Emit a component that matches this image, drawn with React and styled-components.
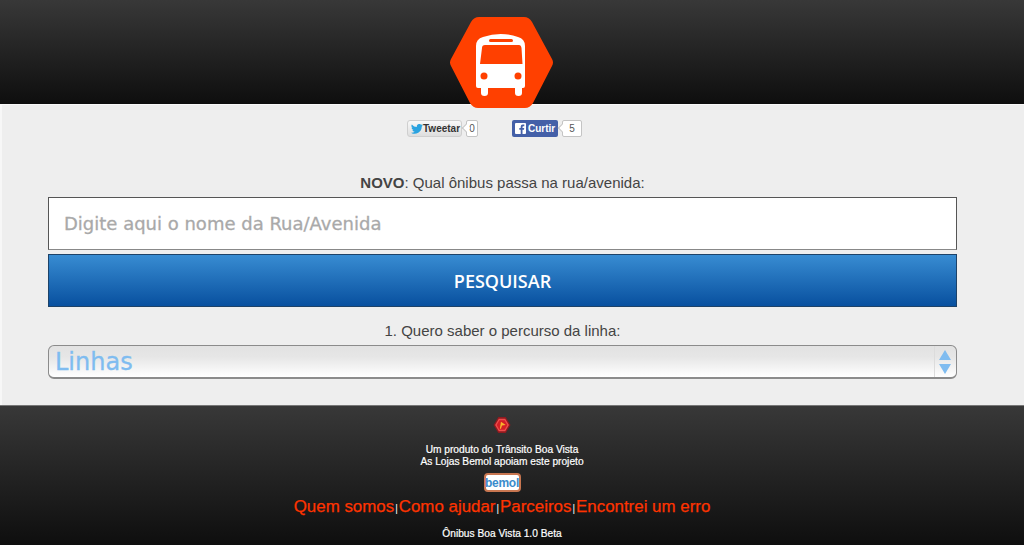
import React from 'react'
import styled, { createGlobalStyle } from 'styled-components'

const GlobalStyle = createGlobalStyle`
  html, body { margin: 0; padding: 0; background: #eeeeee; }
  body { font-family: "Liberation Sans", Arial, sans-serif; overflow: hidden; }
`

const Page = styled.div`
  width: 1024px;
  height: 545px;
  display: flex;
  flex-direction: column;
  overflow: hidden;
`

const Header = styled.header`
  position: relative;
  z-index: 1;
  flex: 0 0 105px;
  box-sizing: border-box;
  border-bottom: 1px solid #f8f8f8;
  background: linear-gradient(#383838, #0e0e0e);
`

const LogoMark = styled.svg`
  position: absolute;
  left: 449px;
  top: 16px;
  width: 105px;
  height: 93px;
`

const Main = styled.main`
  flex: 0 0 300px;
  box-sizing: border-box;
  padding: 15px 67px 0 46px;
  border-left: 2px solid #f7f7f7;
  background: #eeeeee;
  display: flex;
  flex-direction: column;
`

const Social = styled.div`
  display: flex;
  justify-content: flex-start;
  align-items: center;
  height: 17px;
  padding-left: 359px;
`

const TweetButton = styled.div`
  box-sizing: border-box;
  width: 55px;
  height: 17px;
  display: flex;
  align-items: center;
  padding-left: 3px;
  border: 1px solid #cfcfcf;
  border-radius: 3px;
  background: linear-gradient(#f8f8f8, #dedede);
  color: #333;
  font-size: 10px;
  font-weight: bold;
`

const LikeButton = styled.div`
  box-sizing: border-box;
  width: 46px;
  height: 17px;
  margin-left: 34px;
  display: flex;
  align-items: center;
  gap: 2px;
  padding-left: 3px;
  border-radius: 2px;
  background: #4460a8;
  color: #fff;
  font-size: 10px;
  font-weight: bold;
`

const FbSquare = styled.span`
  width: 11px;
  height: 11px;
  background: #fff;
  border-radius: 1px;
  display: block;
  overflow: hidden;
`

const Count = styled.div`
  position: relative;
  box-sizing: border-box;
  width: ${p => p.$width}px;
  height: 17px;
  margin-left: 4px;
  display: flex;
  align-items: center;
  justify-content: center;
  border: 1px solid #c4c4c4;
  border-radius: 2px;
  background: #fff;
  color: #555;
  font-size: 10px;

  &::before {
    content: '';
    position: absolute;
    left: -4px;
    top: 4px;
    width: 5px;
    height: 5px;
    background: #fff;
    border-left: 1px solid #c4c4c4;
    border-bottom: 1px solid #c4c4c4;
    transform: rotate(45deg);
  }
`

const Label = styled.div`
  text-align: center;
  color: #444;
  font-size: 15px;
  line-height: 18px;
  margin-top: ${p => p.$top}px;
`

const SearchInput = styled.div`
  box-sizing: border-box;
  height: 53px;
  margin-top: 5px;
  padding-left: 15px;
  display: flex;
  align-items: center;
  background: #fff;
  border: 1px solid #555;
  border-bottom-color: #888;
  color: #a9a9a9;
  font-family: "DejaVu Sans", sans-serif;
  font-size: 18px;
  -webkit-text-stroke: 0.3px #a9a9a9;
`

const SearchButton = styled.div`
  box-sizing: border-box;
  height: 53px;
  margin-top: 4px;
  display: flex;
  align-items: center;
  justify-content: center;
  background: linear-gradient(#388cd2, #08509f);
  border: 1px solid #1d4268;
  color: #fff;
  font-family: "Open Sans", sans-serif;
  font-size: 18px;
  font-weight: 600;
`

const LineSelect = styled.div`
  box-sizing: border-box;
  position: relative;
  height: 34px;
  margin-top: 5px;
  padding-left: 6px;
  display: flex;
  align-items: center;
  border: 1px solid #8b8b8b;
  border-bottom-width: 2px;
  border-radius: 6px;
  background: linear-gradient(#e2e2e2, #e6e6e6 35%, #ffffff);
  color: #7fbcf0;
  font-family: "DejaVu Sans", sans-serif;
  font-size: 24px;
  -webkit-text-stroke: 0.3px #7fbcf0;
`

const Stepper = styled.div`
  position: absolute;
  top: 0;
  right: 0;
  bottom: 0;
  box-sizing: border-box;
  width: 22px;
  padding-right: 1px;
  border-left: 1px solid #dcdcdc;
  display: flex;
  flex-direction: column;
  align-items: center;
  justify-content: center;
  gap: 4px;
`

const Arrow = styled.span`
  width: 0;
  height: 0;
  border-left: 6px solid transparent;
  border-right: 6px solid transparent;
  border-${p => (p.$down ? 'top' : 'bottom')}: 10px solid #7fbcf0;
`

const Footer = styled.footer`
  flex: 0 0 140px;
  box-sizing: border-box;
  padding: 10px 20px 0 0;
  border-top: 1px solid #777;
  background: linear-gradient(#383838, #0e0e0e);
  display: flex;
  flex-direction: column;
  align-items: center;
  color: #fff;
`

const SmallMark = styled.svg`
  display: block;
  width: 18px;
  height: 18px;
`

const Credits = styled.div`
  margin-top: 10px;
  text-align: center;
  font-size: 10.2px;
  line-height: 12px;
  -webkit-text-stroke: 0.2px #fff;
`

const BemolBadge = styled.div`
  box-sizing: border-box;
  width: 37px;
  height: 19px;
  margin-top: 5px;
  display: flex;
  align-items: center;
  justify-content: center;
  background: #fff;
  border: 2px solid #c87650;
  border-radius: 4px;
  color: #3a8ccc;
  font-size: 12px;
  font-weight: bold;
  letter-spacing: -0.3px;
`

const Links = styled.nav`
  margin-top: 3px;
  display: flex;
  align-items: baseline;
  height: 23px;
  font-size: 16.9px;
  line-height: 23px;
`

const FooterLink = styled.a`
  color: #ff3300;
  -webkit-text-stroke: 0.25px #ff3300;
`

const Divider = styled.span`
  color: #fff;
  font-size: 10px;
  margin: 0 1px;
`

const Version = styled.div`
  margin-top: 10px;
  font-size: 10.2px;
  line-height: 12px;
  -webkit-text-stroke: 0.2px #fff;
`

const footerLinks = ['Quem somos', 'Como ajudar', 'Parceiros', 'Encontrei um erro']

function BusLogo() {
  return (
    <LogoMark viewBox="0 0 105 93">
      <path d="M30 1 H75 Q80 1 83 6 L103 43 Q105 46.500 103 50 L84 87 Q81 92 76 92 H29 Q24 92 21 87 L2 50 Q0 46.500 2 43 L22 6 Q25 1 30 1 Z" fill="#ff4000" />
      <path d="M27 30 Q27 23 34 21 Q52 15 69 21 Q76 23 76 30 V70 Q76 72 74 72 H73 V77 Q73 80 69.500 80 Q66 80 66 77 V72 H39 V77 Q39 80 35.500 80 Q32 80 32 77 V72 H29 Q27 72 27 70 Z" fill="#fff" />
      <rect x="40" y="23" width="24" height="3" rx="1.500" fill="#ff4000" />
      <path d="M33 32 Q33 29 36 29 H70 Q72 29 72.500 32 L73.500 48 H31 Z" fill="#ff4000" />
      <circle cx="35" cy="60" r="3.500" fill="#ff4000" />
      <circle cx="69" cy="60" r="3.500" fill="#ff4000" />
    </LogoMark>
  )
}

function TransitoMark() {
  return (
    <SmallMark viewBox="0 0 17 17">
      <path d="M5 1 H12 L16.500 8.500 L12 16 H5 L.5 8.500 Z" fill="#8e1a1f" />
      <path d="M5.500 2.500 H11.500 L15 8.500 L11.500 14.500 H5.500 L2 8.500 Z" fill="#ef4d4d" />
      <path d="M6 4 H11 L13.500 8.500 L11 13 H6 L3.500 8.500 Z" fill="#d31f26" />
      <path d="M6.500 12 L7.500 5.500 L12 8.500 L8.500 9 L7.500 12 Z" fill="#f8b52c" />
    </SmallMark>
  )
}

export default function App() {
  return (
    <Page>
      <GlobalStyle />
      <Header>
        <BusLogo />
      </Header>
      <Main>
        <Social>
          <TweetButton>
            <svg width="12" height="10" viewBox="0 0 24 20">
              <path d="M24 2.400a10 10 0 0 1-2.800.8A5 5 0 0 0 23.300.5a10 10 0 0 1-3.100 1.200 4.900 4.900 0 0 0-8.400 4.500A14 14 0 0 1 1.700.9a4.900 4.900 0 0 0 1.500 6.600 5 5 0 0 1-2.200-.6 4.900 4.900 0 0 0 3.900 4.900 5 5 0 0 1-2.200.1 4.900 4.900 0 0 0 4.600 3.400A9.900 9.900 0 0 1 0 17.300 14 14 0 0 0 21.500 5a10 10 0 0 0 2.500-2.600z" fill="#2aa3e0" />
            </svg>
            Tweetar
          </TweetButton>
          <Count $width={12}>0</Count>
          <LikeButton>
            <FbSquare>
              <svg width="11" height="11" viewBox="0 0 11 11">
                <path d="M7.500 11 V6.800 H9 L9.200 5 H7.500 V4 Q7.500 3.200 8.300 3.200 H9.300 V1.600 H7.800 Q5.700 1.600 5.700 3.700 V5 H4.300 V6.800 H5.700 V11 Z" fill="#4460a8" />
              </svg>
            </FbSquare>
            Curtir
          </LikeButton>
          <Count $width={20}>5</Count>
        </Social>
        <Label $top={37}><b>NOVO</b>: Qual ônibus passa na rua/avenida:</Label>
        <SearchInput>Digite aqui o nome da Rua/Avenida</SearchInput>
        <SearchButton>PESQUISAR</SearchButton>
        <Label $top={15}>1. Quero saber o percurso da linha:</Label>
        <LineSelect>
          Linhas
          <Stepper>
            <Arrow />
            <Arrow $down />
          </Stepper>
        </LineSelect>
      </Main>
      <Footer>
        <TransitoMark />
        <Credits>
          Um produto do Trânsito Boa Vista<br />
          As Lojas Bemol apoiam este projeto
        </Credits>
        <BemolBadge>bemol</BemolBadge>
        <Links>
          {footerLinks.map((link, i) => (
            <React.Fragment key={link}>
              {i > 0 && <Divider>|</Divider>}
              <FooterLink>{link}</FooterLink>
            </React.Fragment>
          ))}
        </Links>
        <Version>Ônibus Boa Vista 1.0 Beta</Version>
      </Footer>
    </Page>
  )
}
